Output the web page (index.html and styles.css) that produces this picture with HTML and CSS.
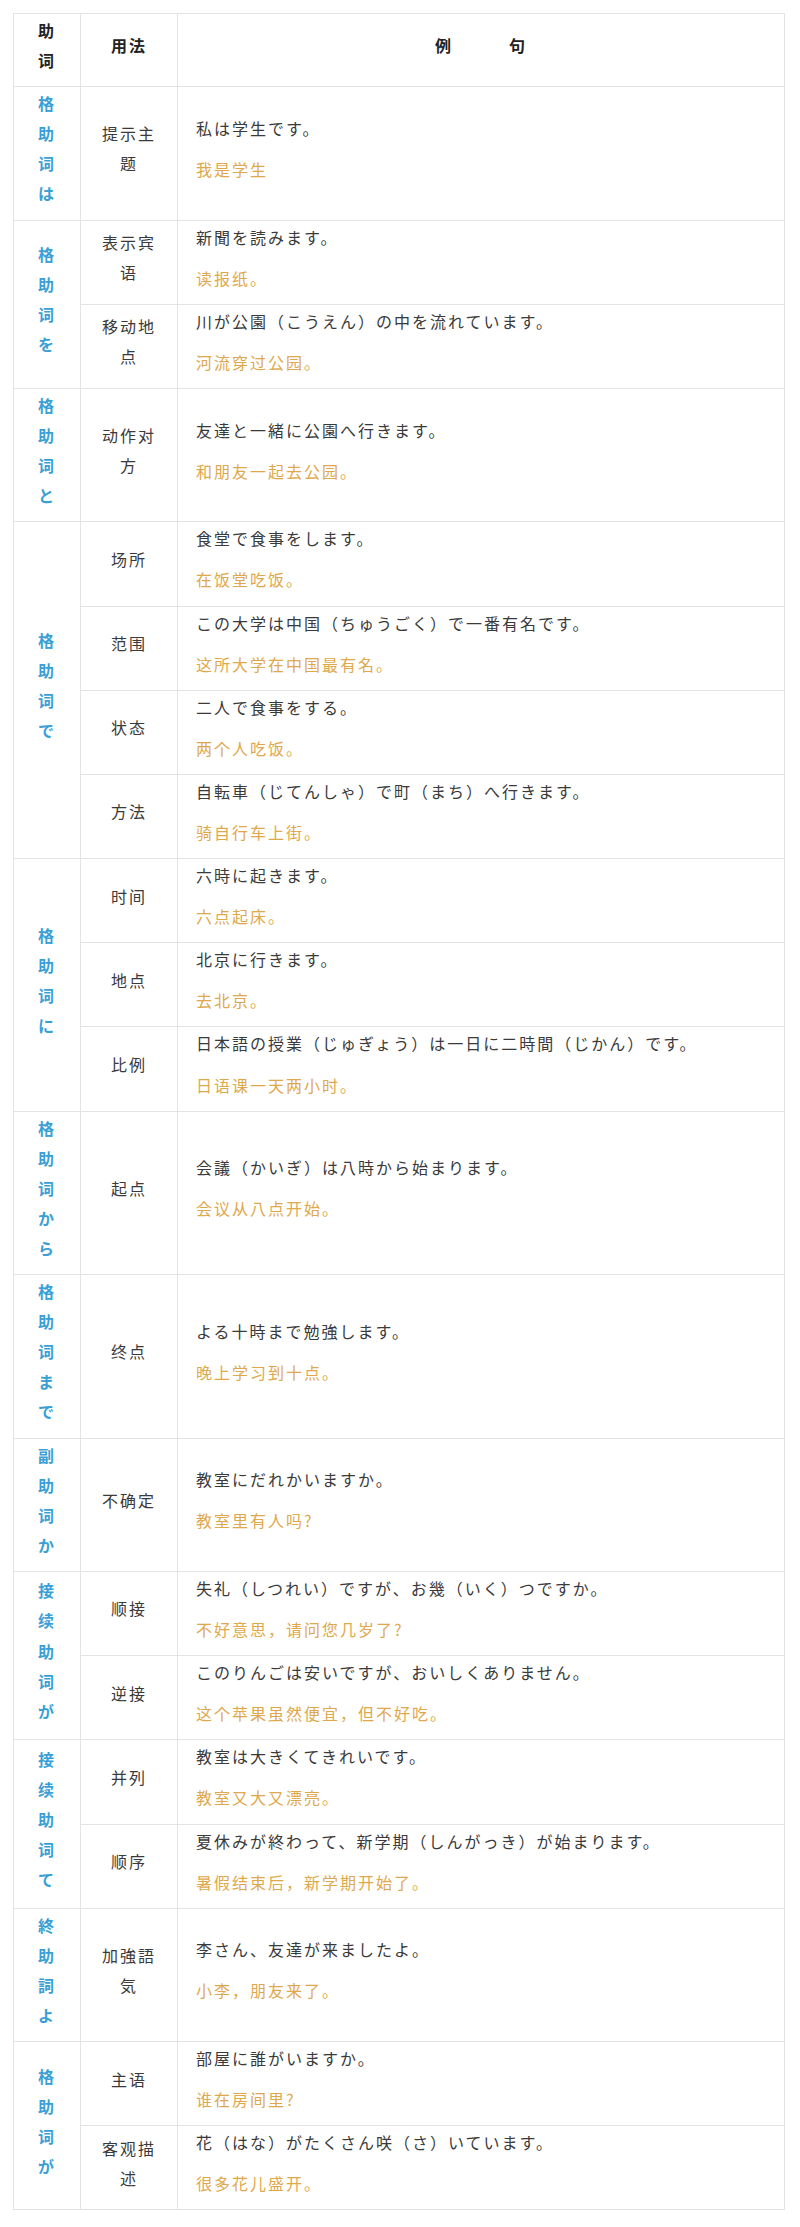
FILE: index.html
```html
<!DOCTYPE html>
<html lang="ja">
<head>
<meta charset="utf-8">
<title>助词用法</title>
<link rel="stylesheet" href="styles.css">
</head>
<body>
<table class="grammar">
  <colgroup>
    <col class="c-particle">
    <col class="c-usage">
    <col class="c-example">
  </colgroup>
  <thead>
    <tr>
      <th><p>助词</p></th>
      <th><p>用法</p></th>
      <th><p>例<span class="gap"></span>句</p></th>
    </tr>
  </thead>
  <tbody>
    <tr>
      <td class="particle"><p>格助词は</p></td>
      <td class="usage"><p>提示主题</p></td>
      <td class="ex"><p class="jp">私は学生です。</p><p class="cn">我是学生</p></td>
    </tr>
    <tr>
      <td class="particle" rowspan="2"><p>格助词を</p></td>
      <td class="usage"><p>表示宾语</p></td>
      <td class="ex"><p class="jp">新聞を読みます。</p><p class="cn">读报纸。</p></td>
    </tr>
    <tr>
      <td class="usage"><p>移动地点</p></td>
      <td class="ex"><p class="jp">川が公園（こうえん）の中を流れています。</p><p class="cn">河流穿过公园。</p></td>
    </tr>
    <tr>
      <td class="particle"><p>格助词と</p></td>
      <td class="usage"><p>动作对方</p></td>
      <td class="ex"><p class="jp">友達と一緒に公園へ行きます。</p><p class="cn">和朋友一起去公园。</p></td>
    </tr>
    <tr>
      <td class="particle" rowspan="4"><p>格助词で</p></td>
      <td class="usage"><p>场所</p></td>
      <td class="ex"><p class="jp">食堂で食事をします。</p><p class="cn">在饭堂吃饭。</p></td>
    </tr>
    <tr>
      <td class="usage"><p>范围</p></td>
      <td class="ex"><p class="jp">この大学は中国（ちゅうごく）で一番有名です。</p><p class="cn">这所大学在中国最有名。</p></td>
    </tr>
    <tr>
      <td class="usage"><p>状态</p></td>
      <td class="ex"><p class="jp">二人で食事をする。</p><p class="cn">两个人吃饭。</p></td>
    </tr>
    <tr>
      <td class="usage"><p>方法</p></td>
      <td class="ex"><p class="jp">自転車（じてんしゃ）で町（まち）へ行きます。</p><p class="cn">骑自行车上街。</p></td>
    </tr>
    <tr>
      <td class="particle" rowspan="3"><p>格助词に</p></td>
      <td class="usage"><p>时间</p></td>
      <td class="ex"><p class="jp">六時に起きます。</p><p class="cn">六点起床。</p></td>
    </tr>
    <tr>
      <td class="usage"><p>地点</p></td>
      <td class="ex"><p class="jp">北京に行きます。</p><p class="cn">去北京。</p></td>
    </tr>
    <tr>
      <td class="usage"><p>比例</p></td>
      <td class="ex"><p class="jp">日本語の授業（じゅぎょう）は一日に二時間（じかん）です。</p><p class="cn">日语课一天两小时。</p></td>
    </tr>
    <tr>
      <td class="particle"><p>格助词から</p></td>
      <td class="usage"><p>起点</p></td>
      <td class="ex"><p class="jp">会議（かいぎ）は八時から始まります。</p><p class="cn">会议从八点开始。</p></td>
    </tr>
    <tr>
      <td class="particle"><p>格助词まで</p></td>
      <td class="usage"><p>终点</p></td>
      <td class="ex"><p class="jp">よる十時まで勉強します。</p><p class="cn">晚上学习到十点。</p></td>
    </tr>
    <tr>
      <td class="particle"><p>副助词か</p></td>
      <td class="usage"><p>不确定</p></td>
      <td class="ex"><p class="jp">教室にだれかいますか。</p><p class="cn">教室里有人吗?</p></td>
    </tr>
    <tr>
      <td class="particle" rowspan="2"><p>接续助词が</p></td>
      <td class="usage"><p>顺接</p></td>
      <td class="ex"><p class="jp">失礼（しつれい）ですが、お幾（いく）つですか。</p><p class="cn">不好意思，请问您几岁了?</p></td>
    </tr>
    <tr>
      <td class="usage"><p>逆接</p></td>
      <td class="ex"><p class="jp">このりんごは安いですが、おいしくありません。</p><p class="cn">这个苹果虽然便宜，但不好吃。</p></td>
    </tr>
    <tr>
      <td class="particle" rowspan="2"><p>接续助词て</p></td>
      <td class="usage"><p>并列</p></td>
      <td class="ex"><p class="jp">教室は大きくてきれいです。</p><p class="cn">教室又大又漂亮。</p></td>
    </tr>
    <tr>
      <td class="usage"><p>顺序</p></td>
      <td class="ex"><p class="jp">夏休みが終わって、新学期（しんがっき）が始まります。</p><p class="cn">暑假结束后，新学期开始了。</p></td>
    </tr>
    <tr>
      <td class="particle"><p>終助詞よ</p></td>
      <td class="usage"><p>加強語気</p></td>
      <td class="ex"><p class="jp">李さん、友達が来ましたよ。</p><p class="cn">小李，朋友来了。</p></td>
    </tr>
    <tr>
      <td class="particle" rowspan="2"><p>格助词が</p></td>
      <td class="usage"><p>主语</p></td>
      <td class="ex"><p class="jp">部屋に誰がいますか。</p><p class="cn">谁在房间里?</p></td>
    </tr>
    <tr>
      <td class="usage"><p>客观描述</p></td>
      <td class="ex"><p class="jp">花（はな）がたくさん咲（さ）いています。</p><p class="cn">很多花儿盛开。</p></td>
    </tr>
  </tbody>
</table>
</body>
</html>
```

FILE: styles.css
```css
html, body {
  margin: 0;
  background: #ffffff;
}

body {
  padding: 13px 16px 15px 13px;
  font-family: "Noto Sans CJK SC", "Noto Sans CJK JP", sans-serif;
  font-size: 16px;
  letter-spacing: 2px;
  color: #3a3a3a;
}

.grammar {
  width: 771px;
  border-collapse: collapse;
  table-layout: fixed;
  border: 1px solid #e3e3e3;
}

.c-particle { width: 67px; }
.c-usage { width: 97px; }
.c-example { width: 607px; }

.grammar th,
.grammar td {
  border: 1px solid #e3e3e3;
  padding: 1px 18px 0;
  vertical-align: middle;
  text-align: center;
}

.grammar p {
  margin: 0 0 11px;
  line-height: 30.1px;
}

.grammar th {
  font-weight: bold;
  color: #222222;
}

.gap {
  display: inline-block;
  width: 56px;
}

.particle {
  color: #3a9fd6;
  font-weight: bold;
}

.usage {
  color: #3a3a3a;
}

.grammar td.ex {
  text-align: left;
}

.cn {
  color: #e0a84c;
}
```
